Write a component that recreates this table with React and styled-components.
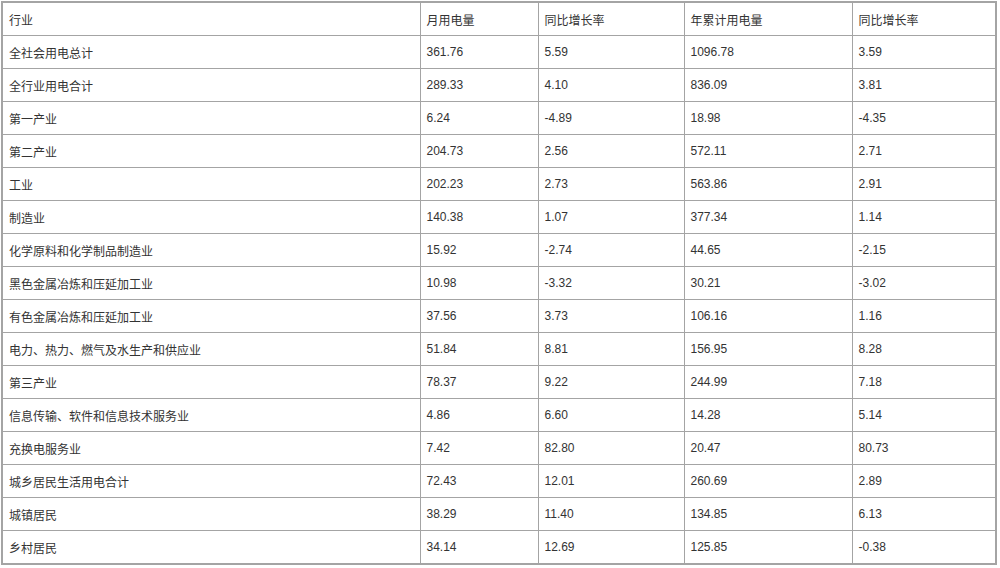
import React from 'react';
import styled, { createGlobalStyle } from 'styled-components';

const GlobalStyle = createGlobalStyle`
  body {
    margin: 0;
    background: #fff;
  }
`;

const Page = styled.div`
  padding: 1px 0 0 1px;
`;

const StyledTable = styled.table`
  width: 994px;
  table-layout: fixed;
  border-collapse: collapse;
  border: 2px solid #a4a4a4;
  font-family: 'Liberation Sans', 'Noto Sans CJK SC', sans-serif;
  font-size: 12px;
  color: #333;
`;

const StyledTd = styled.td`
  height: 32px;
  padding: 0 0 0 6px;
  border: 1px solid #a4a4a4;
  vertical-align: middle;
  text-align: left;
  font-weight: normal;
  white-space: nowrap;
`;

const columns = [418, 118, 146, 168, 144];

const header = ['行业', '月用电量', '同比增长率', '年累计用电量', '同比增长率'];

const rows = [
  ['全社会用电总计', '361.76', '5.59', '1096.78', '3.59'],
  ['全行业用电合计', '289.33', '4.10', '836.09', '3.81'],
  ['第一产业', '6.24', '-4.89', '18.98', '-4.35'],
  ['第二产业', '204.73', '2.56', '572.11', '2.71'],
  ['工业', '202.23', '2.73', '563.86', '2.91'],
  ['制造业', '140.38', '1.07', '377.34', '1.14'],
  ['化学原料和化学制品制造业', '15.92', '-2.74', '44.65', '-2.15'],
  ['黑色金属冶炼和压延加工业', '10.98', '-3.32', '30.21', '-3.02'],
  ['有色金属冶炼和压延加工业', '37.56', '3.73', '106.16', '1.16'],
  ['电力、热力、燃气及水生产和供应业', '51.84', '8.81', '156.95', '8.28'],
  ['第三产业', '78.37', '9.22', '244.99', '7.18'],
  ['信息传输、软件和信息技术服务业', '4.86', '6.60', '14.28', '5.14'],
  ['充换电服务业', '7.42', '82.80', '20.47', '80.73'],
  ['城乡居民生活用电合计', '72.43', '12.01', '260.69', '2.89'],
  ['城镇居民', '38.29', '11.40', '134.85', '6.13'],
  ['乡村居民', '34.14', '12.69', '125.85', '-0.38'],
];

export default function App() {
  return (
    <Page>
      <GlobalStyle />
      <StyledTable>
        <colgroup>
          {columns.map((w, i) => (
            <col key={i} style={{ width: w }} />
          ))}
        </colgroup>
        <tbody>
          <tr>
            {header.map((h, i) => (
              <StyledTd key={i}>{h}</StyledTd>
            ))}
          </tr>
          {rows.map((r, i) => (
            <tr key={i}>
              {r.map((c, j) => (
                <StyledTd key={j}>{c}</StyledTd>
              ))}
            </tr>
          ))}
        </tbody>
      </StyledTable>
    </Page>
  );
}
